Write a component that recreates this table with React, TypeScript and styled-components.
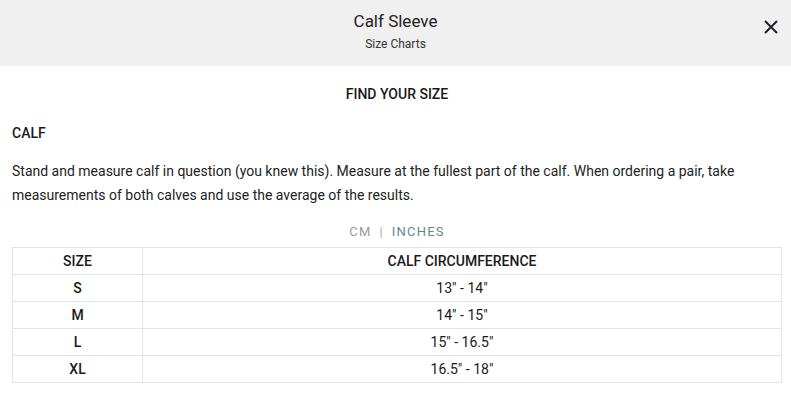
import React from "react";
import styled, { createGlobalStyle } from "styled-components";

const Global = createGlobalStyle`
  html, body { margin: 0; padding: 0; background: #fff; }
  body { font-family: Roboto, "Noto Sans", sans-serif; color: #1a1a1a; }
`;

const Page = styled.div`
  width: 791px;
  display: flex;
  flex-direction: column;
`;

const Header = styled.header`
  position: relative;
  height: 66px;
  background: #f0f0f0;
  display: flex;
  flex-direction: column;
  align-items: center;
  padding-top: 10px;
  box-sizing: border-box;
`;

const Title = styled.h1`
  margin: 0;
  font-size: 17px;
  font-weight: 400;
  line-height: 22px;
  color: #222;
`;

const Subtitle = styled.div`
  margin-top: 4px;
  font-size: 12px;
  line-height: 16px;
  color: #333;
`;

const Close = styled.button`
  position: absolute;
  right: 12px;
  top: 19px;
  width: 16px;
  height: 16px;
  padding: 0;
  border: 0;
  background: none;
  display: flex;
`;

const Body = styled.main`
  padding: 0 9px 0 12px;
  display: flex;
  flex-direction: column;
`;

const Heading = styled.h2`
  margin: 19px 0 0;
  text-align: center;
  font-size: 14px;
  font-weight: 500;
  line-height: 18px;
`;

const Section = styled.h3`
  margin: 21px 0 0;
  font-size: 14px;
  font-weight: 500;
  line-height: 18px;
`;

const Para = styled.p`
  margin: 17px 0 0;
  font-size: 14px;
  line-height: 24px;
  color: #222;
`;

const Units = styled.div`
  margin-top: 17px;
  display: flex;
  justify-content: center;
  gap: 8px;
  font-size: 13px;
  letter-spacing: 1.2px;
  line-height: 16px;
`;

const Unit = styled.span<{ $active?: boolean }>`
  color: ${(p) => (p.$active ? "#5e8a8a" : "#9a9a9a")};
`;

const Sep = styled.span`
  color: #aaa;
`;

const Table = styled.table`
  margin-top: 7px;
  width: 770px;
  border-collapse: collapse;
  font-size: 14px;
`;

const Cell = styled.td<{ $head?: boolean; $narrow?: boolean }>`
  border: 1px solid #e4e4e4;
  height: 26px;
  padding: 0;
  text-align: center;
  font-weight: ${(p) => (p.$head ? 500 : 400)};
  width: ${(p) => (p.$narrow ? "129px" : "auto")};
  color: #1a1a1a;
`;

const rows = [
  ["S", "13\" - 14\""],
  ["M", "14\" - 15\""],
  ["L", "15\" - 16.5\""],
  ["XL", "16.5\" - 18\""],
];

export default function App() {
  return (
    <Page>
      <Global />
      <Header>
        <Title>Calf Sleeve</Title>
        <Subtitle>Size Charts</Subtitle>
        <Close aria-label="Close">
          <svg width="16" height="16" viewBox="0 0 16 16">
            <path d="M2 2 L14 14 M14 2 L2 14" stroke="#1f2328" strokeWidth="2" />
          </svg>
        </Close>
      </Header>
      <Body>
        <Heading>FIND YOUR SIZE</Heading>
        <Section>CALF</Section>
        <Para>
          Stand and measure calf in question (you knew this). Measure at the fullest part of the calf. When ordering a pair, take measurements of both calves and use the average of the results.
        </Para>
        <Units>
          <Unit>CM</Unit>
          <Sep>|</Sep>
          <Unit $active>INCHES</Unit>
        </Units>
        <Table>
          <tbody>
            <tr>
              <Cell $head $narrow>SIZE</Cell>
              <Cell $head>CALF CIRCUMFERENCE</Cell>
            </tr>
            {rows.map(([s, v]) => (
              <tr key={s}>
                <Cell $head $narrow>{s}</Cell>
                <Cell>{v}</Cell>
              </tr>
            ))}
          </tbody>
        </Table>
      </Body>
    </Page>
  );
}
